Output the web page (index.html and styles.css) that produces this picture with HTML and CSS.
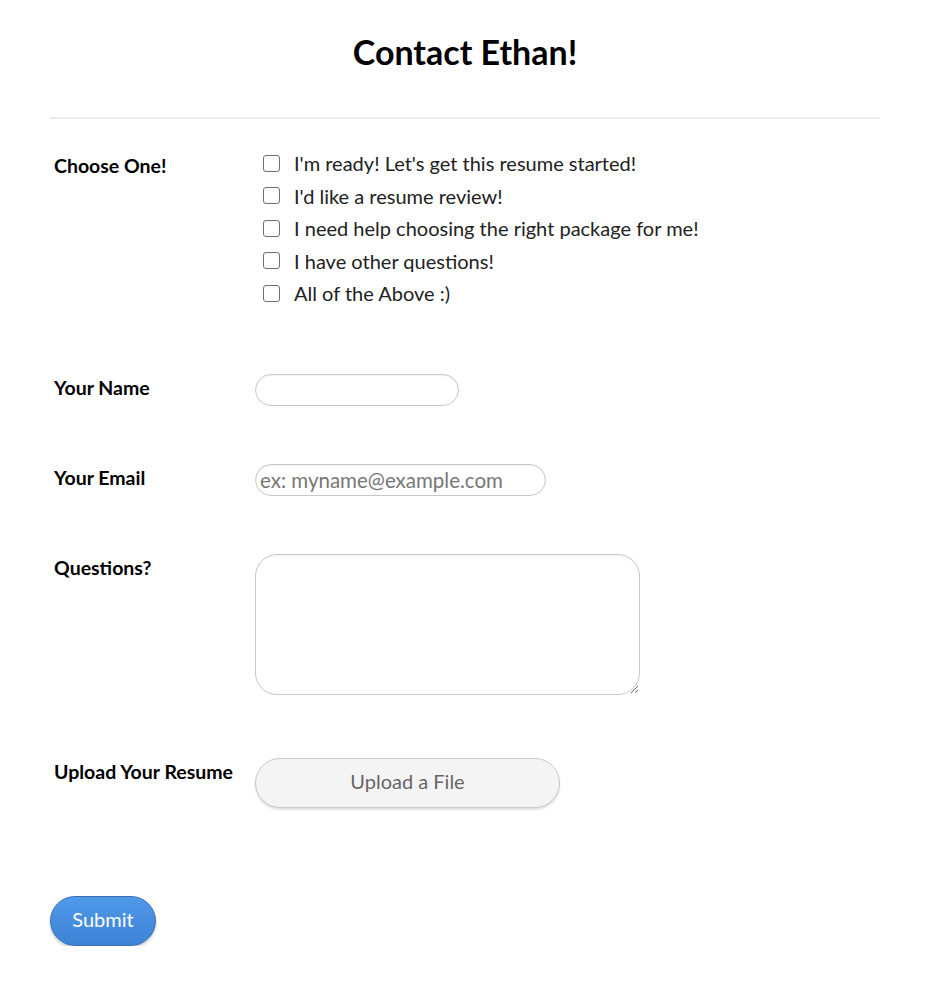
FILE: index.html
```html
<!DOCTYPE html>
<html lang="en">
<head>
    <meta charset="UTF-8">
    <meta name="viewport" content="width=device-width, initial-scale=1.0">
    <title>Contact Ethan!</title>
    <link rel="stylesheet" href="styles.css">
</head>
<body>

    <!-- Titulo -->
    <header>
        <h1>Contact Ethan!</h1>
    </header>

    <!-- Formulario -->
    <form class="formulario">
        <div class="fila">
            <span class="etiqueta etiqueta-check">Choose One!</span>
            <div class="opciones">
                <label class="opcion"><input type="checkbox"> I'm ready! Let's get this resume started!</label>
                <label class="opcion"><input type="checkbox"> I'd like a resume review!</label>
                <label class="opcion"><input type="checkbox"> I need help choosing the right package for me!</label>
                <label class="opcion"><input type="checkbox"> I have other questions!</label>
                <label class="opcion"><input type="checkbox"> All of the Above :)</label>
            </div>
        </div>

        <div class="fila fila-nombre">
            <label class="etiqueta" for="nombre">Your Name</label>
            <input class="campo campo-nombre" type="text" id="nombre" name="nombre">
        </div>

        <div class="fila fila-email">
            <label class="etiqueta" for="email">Your Email</label>
            <input class="campo campo-email" type="email" id="email" name="email" placeholder="ex: myname@example.com">
        </div>

        <div class="fila fila-preguntas">
            <label class="etiqueta" for="preguntas">Questions?</label>
            <textarea class="campo campo-preguntas" id="preguntas" name="preguntas"></textarea>
        </div>

        <div class="fila fila-archivo">
            <span class="etiqueta">Upload Your Resume</span>
            <button type="button" class="subir">Upload a File</button>
        </div>

        <button type="submit" class="enviar">Submit</button>
    </form>

</body>
</html>
```

FILE: styles.css
```css
body { margin: 0; font-family: Lato, "Open Sans", sans-serif; color: #222; background: #fff; }
header { margin: 0 50px; border-bottom: 2px solid #ececec; padding: 30px 0 43px; text-align: center; }
h1 { margin: 0; font-size: 34px; line-height: 44px; font-weight: 700; color: #000; }
.formulario { margin: 0 50px; padding-top: 28px; }
.fila { display: flex; align-items: flex-start; }
.etiqueta { width: 205px; padding-left: 4px; box-sizing: border-box; font-size: 19.5px; font-weight: 700; line-height: 28px; color: #000; flex-shrink: 0; }
.etiqueta-check { margin-top: 5px; }
.opciones { display: flex; flex-direction: column; }
.opcion { display: flex; align-items: center; height: 32.5px; font-size: 20px; color: #222; }
.opcion input { appearance: none; width: 17px; height: 17px; margin: 0 14px 0 8px; border: 1px solid #6f6f6f; border-radius: 3px; background: #fff; }
.fila-nombre { margin-top: 64px; }
.fila-email, .fila-preguntas { margin-top: 58px; }
.fila-archivo { margin-top: 63px; }
.campo { box-sizing: border-box; border: 1px solid #c8c8c8; border-radius: 16px; font-family: inherit; font-size: 20.5px; padding: 0 4px; background: #fff; box-shadow: inset 0 1px 2px rgba(0,0,0,0.06); }
.campo::placeholder { color: #777; }
.campo-nombre { width: 204px; height: 32px; }
.campo-email { width: 291px; height: 32px; }
.campo-preguntas { width: 385px; height: 141px; border-radius: 22px; resize: both; }
.subir { width: 305px; height: 50px; padding: 0 0 4px; border: 1px solid #c9c9c9; border-radius: 25px; background: #f4f4f4; color: #666; font-family: inherit; font-size: 20px; box-shadow: 0 2px 2px rgba(0,0,0,0.12); cursor: pointer; }
.enviar { margin-top: 88px; width: 106px; height: 50px; padding: 0 0 4px; border: 1px solid #3a6fb8; border-radius: 25px; background: linear-gradient(#5099e8, #3d82d6); color: #fff; font-family: inherit; font-size: 20px; box-shadow: 0 2px 3px rgba(0,0,0,0.2); cursor: pointer; }
.enviar:hover { background: #3a78c8; }
```
